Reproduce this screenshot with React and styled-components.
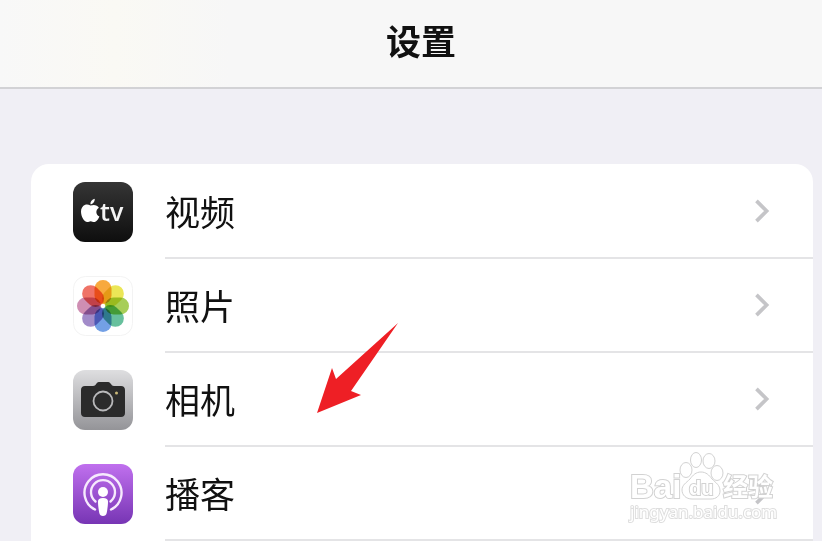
import React from 'react';
import styled, { createGlobalStyle } from 'styled-components';

const petals = ['#f79a1c', '#e8e23a', '#98c63c', '#4cb58c', '#5b8fe0', '#9277c0', '#c77aa6', '#ec5a4c'];

const TvIcon = () => (
  <IconSvg viewBox="0 0 60 60" aria-hidden="true">
    <defs>
      <linearGradient id="tv" x1="0" y1="0" x2="0" y2="1">
        <stop offset="0" stopColor="#353535" />
        <stop offset="1" stopColor="#0e0e0e" />
      </linearGradient>
    </defs>
    <rect width="60" height="60" rx="12" fill="url(#tv)" />
    <path
      fill="#fff"
      d="M17.500 23.500c-2-1-3.500-1.500-5.300-.7C9.500 23.900 8 26.500 8 29.500c0 4.900 3 10.500 6.300 10.500 1.400 0 2-.8 3.400-.8s2 .8 3.500.8c2 0 4.200-2.900 5.200-5.600-3.800-1.700-4.100-6.700-.5-8.700-1.700-2.700-4.700-3.300-8.400-2.200zM17.400 22.300c-.2-2.900 1.700-5 4.300-5.600.3 3-1.700 5.300-4.300 5.600z"
    />
    <text x="27" y="39" fontSize="25" fontWeight="600" fill="#f4f4f4" fontFamily="'Open Sans', sans-serif">tv</text>
  </IconSvg>
);

const PhotosIcon = () => (
  <IconSvg viewBox="0 0 60 60" aria-hidden="true">
    <rect x=".5" y=".5" width="59" height="59" rx="12" fill="#fff" stroke="#f3f3f3" />
    <Petals>
      {petals.map((color, i) => (
        <rect key={color} x="21.500" y="4" width="17" height="24" rx="8.500" fill={color} fillOpacity=".85" transform={`rotate(${i * 45} 30 30)`} />
      ))}
    </Petals>
    <circle cx="30" cy="30" r="1.800" fill="#fff" />
  </IconSvg>
);

const CameraIcon = () => (
  <IconSvg viewBox="0 0 60 60" aria-hidden="true">
    <defs>
      <linearGradient id="camera" x1="0" y1="0" x2="0" y2="1">
        <stop offset="0" stopColor="#dedee0" />
        <stop offset="1" stopColor="#949498" />
      </linearGradient>
    </defs>
    <rect width="60" height="60" rx="12" fill="url(#camera)" />
    <path
      fill="#2b2b2b"
      d="M12 16h8c2 0 2.500-1 3.500-2.500S25 12 27 12h7c2 0 2.500.4 3.500 1.500S39 16 41 16h7c2.500 0 4 1.500 4 4v23c0 2.500-1.500 4-4 4H12c-2.500 0-4-1.500-4-4V20c0-2.500 1.500-4 4-4z"
    />
    <circle cx="30" cy="31" r="9.500" fill="none" stroke="#b9b9bb" strokeWidth="1.800" />
    <circle cx="43.500" cy="23" r="1.500" fill="#c9b878" />
  </IconSvg>
);

const PodcastIcon = () => (
  <IconSvg viewBox="0 0 60 60" aria-hidden="true">
    <defs>
      <linearGradient id="podcast" x1="0" y1="0" x2="0" y2="1">
        <stop offset="0" stopColor="#c070ee" />
        <stop offset="1" stopColor="#7735b4" />
      </linearGradient>
    </defs>
    <rect width="60" height="60" rx="12" fill="url(#podcast)" />
    <g fill="none" stroke="#f6eafd" strokeWidth="2.400" strokeLinecap="round">
      <path d="M22 45.500a18.500 18.500 0 1 1 16 0" />
      <path d="M22.500 37.500a12 12 0 1 1 15 0" />
    </g>
    <circle cx="30" cy="28" r="5" fill="#fff" />
    <path fill="#fff" d="M30 34c3.500 0 5 1.200 5 3.500 0 3.500-.7 8.500-1.300 11.500-.4 2-1.700 3-3.700 3s-3.300-1-3.700-3c-.6-3-1.300-8-1.300-11.500 0-2.300 1.500-3.500 5-3.500z" />
  </IconSvg>
);

const Chevron = () => (
  <ChevronSvg viewBox="0 0 16 26" aria-hidden="true">
    <path d="M2 2l11 11L2 24" />
  </ChevronSvg>
);

const RedArrow = () => (
  <ArrowSvg viewBox="0 0 82 91" aria-hidden="true">
    <path d="M81 0L34 68l10 4L0 90l15-45 4 11z" />
  </ArrowSvg>
);

const Watermark = () => (
  <WatermarkBox>
    <WatermarkLogo viewBox="0 0 148 50" role="img" aria-label="Baidu 经验">
      <text x="0" y="46" fontSize="33">Bai</text>
      <ellipse cx="56" cy="18" rx="6" ry="7.500" />
      <ellipse cx="66" cy="8" rx="5.500" ry="7.500" />
      <ellipse cx="79" cy="9" rx="6" ry="7.500" />
      <ellipse cx="87" cy="21" rx="6" ry="7.500" />
      <path d="M71 20c5 0 8 3 11 7 4 4 8 6 8 12 0 5-4 8-9 8H62c-6 0-10-4-10-9 0-5 4-7 8-11 3-4 6-7 11-7z" />
      <text x="59" y="43" fontSize="20">du</text>
      <text x="93" y="44" fontSize="25">经验</text>
    </WatermarkLogo>
    <WatermarkUrl>jingyan.baidu.com</WatermarkUrl>
  </WatermarkBox>
);

const items = [
  { id: 'tv', name: '视频', Icon: TvIcon },
  { id: 'photos', name: '照片', Icon: PhotosIcon },
  { id: 'camera', name: '相机', Icon: CameraIcon, overlay: <RedArrow /> },
  { id: 'podcasts', name: '播客', Icon: PodcastIcon, overlay: <Watermark /> },
];

const App = () => {
  return (
    <Page>
      <GlobalStyle />
      <Header>
        <Title>设置</Title>
      </Header>
      <List>
        {items.map(({ id, name, Icon, overlay }) => (
          <Item key={id}>
            <ItemLink href={`#${id}`}>
              <Icon />
              <ItemBody>
                <span>{name}</span>
                <Chevron />
              </ItemBody>
            </ItemLink>
            {overlay}
          </Item>
        ))}
      </List>
    </Page>
  );
};

const GlobalStyle = createGlobalStyle`
  * {
    box-sizing: border-box;
  }
  body {
    margin: 0;
    background: #f0eff5;
    font-family: "Noto Sans CJK SC", sans-serif;
  }
`
const Page = styled.main`
  display: flex;
  flex-direction: column;
  min-height: 100vh;
`
const Header = styled.header`
  display: flex;
  justify-content: center;
  padding: 14px 0 22px 20px;
  border-bottom: 2px solid #d2d2d5;
  background: linear-gradient(90deg, #f8f8f8, #faf9f4 14%, #f7f7f7 28%);
`
const Title = styled.h1`
  margin: 0;
  color: #111;
  font-size: 35px;
  font-weight: 700;
  line-height: 51px;
`
const List = styled.ul`
  flex: 1;
  margin: 75px 9px 0 31px;
  padding: 1px 0 0;
  border-radius: 18px 18px 0 0;
  background: #fff;
  list-style: none;
`
const Item = styled.li`
  position: relative;
`
const ItemLink = styled.a`
  display: flex;
  align-items: center;
  gap: 32px;
  height: 94px;
  padding-left: 42px;
  color: #111;
  text-decoration: none;
`
const ItemBody = styled.div`
  display: flex;
  flex: 1;
  align-items: center;
  justify-content: space-between;
  height: 100%;
  padding-right: 43px;
  border-bottom: 2px solid #e4e4e6;
  font-size: 35px;
  line-height: 52px;
`
const IconSvg = styled.svg`
  flex: none;
  width: 60px;
  height: 60px;
`
const Petals = styled.g`
  isolation: isolate;

  rect {
    mix-blend-mode: multiply;
  }
`
const ChevronSvg = styled.svg`
  width: 16px;
  height: 24px;
  fill: none;
  stroke: #c5c5c8;
  stroke-width: 4;
`
const ArrowSvg = styled.svg`
  position: absolute;
  top: -30px;
  left: 286px;
  z-index: 1;
  width: 82px;
  height: 91px;
  fill: #ee1f25;
  pointer-events: none;
`
const WatermarkBox = styled.div`
  position: absolute;
  top: 5px;
  right: 35px;
  width: 148px;
  pointer-events: none;
`
const WatermarkLogo = styled.svg`
  display: block;
  width: 148px;
  height: 50px;
  overflow: visible;
  fill: #fff;
  fill-opacity: 0.7;
  stroke: #d2d2d2;
  stroke-width: 1;
  font-family: "Liberation Sans", "Noto Sans CJK SC", sans-serif;
  font-weight: 700;

  text {
    stroke-width: 2;
    paint-order: stroke;
    fill-opacity: 1;
  }
`
const WatermarkUrl = styled.div`
  color: #fff;
  font-family: "Noto Sans", sans-serif;
  font-size: 17px;
  line-height: 20px;
  paint-order: stroke;
  -webkit-text-stroke: 2px #dedede;
`

export default App;
